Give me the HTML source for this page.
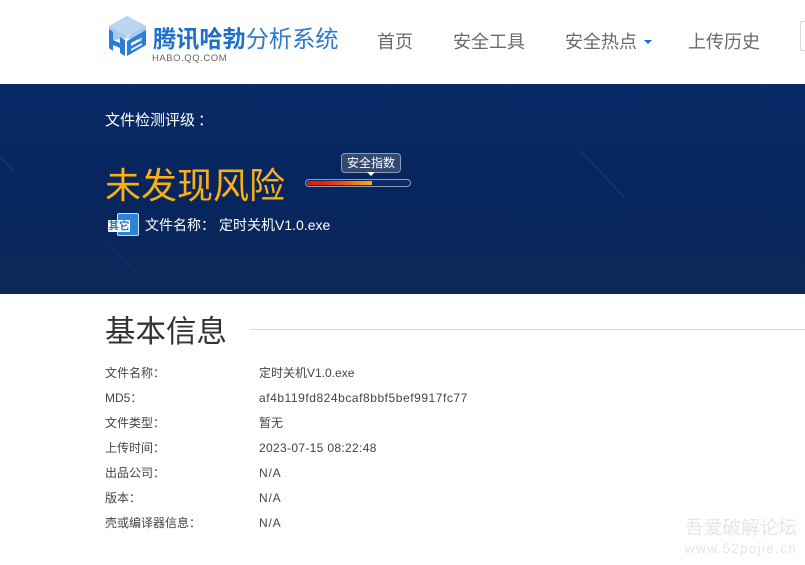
<!DOCTYPE html>
<html lang="zh">
<head>
<meta charset="utf-8">
<title>腾讯哈勃分析系统</title>
<style>
html,body{margin:0;padding:0;background:#fff}
body{width:805px;height:565px;overflow:hidden;position:relative;font-family:"Liberation Sans","Noto Sans CJK SC",sans-serif}
.a{position:absolute;white-space:nowrap}
.nav{top:29px;font-size:18px;line-height:26px;color:#6b6b6b}
.row{font-size:12px;line-height:18px;color:#444}
.val{font-size:12px;line-height:18px;color:#444;left:259px}
.lab{left:105px}
</style>
</head>
<body>
<svg class="a" style="left:108px;top:16px" width="40" height="40" viewBox="0 0 40 40">
<polygon points="19,0 38,10 38,25 19,22 1,25 1,10" fill="#a9c9ee"/>
<polygon points="19,0 22,1 22,20 19,22" fill="#e3eefa"/>
<polygon points="1,10 19,20 38,10 19,0" fill="#bcd5f2"/>
<path d="M1 13 L5 16 L5 24 L12 27 L12 21 L17 24 L17 40 L12 37 L12 32 L5 29 L5 35 L1 32 Z" fill="#2d7ddb"/>
<path d="M19 25 L38 14 L38 29 L19 40 Z M23 27 L23 30 L34 24 L34 21 Z M23 33 L23 35 L34 29 L34 27 Z" fill="#2d7ddb" fill-rule="evenodd"/>
</svg>
<div class="a" style="left:153px;top:23px;font-size:23.2px;line-height:32px;color:#1c6fd0;font-weight:700">腾讯哈勃<span style="font-weight:400;color:#2b7bd6">分析系统</span></div>
<div class="a" style="left:152px;top:53px;font-size:9.5px;line-height:12px;color:#666;letter-spacing:.55px">HABO.QQ.COM</div>

<div class="a nav" style="left:377px">首页</div>
<div class="a nav" style="left:453px">安全工具</div>
<div class="a nav" style="left:565px">安全热点</div>
<div class="a" style="left:644px;top:40px;width:0;height:0;border-left:4px solid transparent;border-right:4px solid transparent;border-top:4px solid #1c6fd0"></div>
<div class="a nav" style="left:688px">上传历史</div>
<div class="a" style="left:800px;top:21px;width:10px;height:30px;border:1px solid #d5d5d5;border-radius:2px;box-sizing:border-box"></div>

<div class="a" style="left:0;top:84px;width:805px;height:210px;overflow:hidden;background:linear-gradient(180deg,#082a66 0%,#07265f 45%,#0b2858 100%)">
<svg width="805" height="210" style="position:absolute;left:0;top:0">
<line x1="0" y1="72" x2="14" y2="88" stroke="#123b76" stroke-width="1.2"/>
<line x1="580" y1="66" x2="625" y2="114" stroke="#123b76" stroke-width="1.2"/>
<line x1="105" y1="155" x2="145" y2="199" stroke="#0c316a" stroke-width="1.2"/>
</svg>
</div>

<div class="a" style="left:105px;top:110px;font-size:15px;line-height:22px;color:#fff">文件检测评级<span style="position:relative;left:3px">：</span></div>
<div class="a" style="left:105px;top:161px;font-size:36px;line-height:50px;color:#fdaf10">未发现风险</div>

<div class="a" style="left:341px;top:153px;width:60px;height:20px;box-sizing:border-box;border:1px solid #8b9cb8;border-radius:4px;background:#33496f;color:#fff;font-size:12px;line-height:18px;text-align:center">安全指数</div>
<div class="a" style="left:367px;top:172px;width:0;height:0;border-left:4px solid transparent;border-right:4px solid transparent;border-top:4px solid #fff"></div>
<div class="a" style="left:305px;top:179px;width:106px;height:8px;box-sizing:border-box;border:1px solid #8b9cb8;border-radius:4px;background:#0b2a60;overflow:hidden">
<div style="margin:1px 0 0 1px;width:65px;height:4px;background:linear-gradient(90deg,#e51a08 0%,#e8200a 25%,#f45a08 60%,#fdae0e 100%);border-radius:2px 0 0 2px"></div>
</div>

<div class="a" style="left:117px;top:213px;width:22px;height:23px;box-sizing:border-box;background:#2a84d8;border:1px solid #cfe3f7;border-radius:2px"></div>
<div class="a" style="left:108px;top:220px;width:22px;height:12px;background:#fff;border-radius:1px;color:#1f76cc;font-size:10.5px;line-height:12px;font-weight:700;text-align:center;overflow:hidden">其它</div>

<div class="a" style="left:145px;top:214px;font-size:14px;line-height:22px;color:#fff">文件名称：</div>
<div class="a" style="left:219px;top:214px;font-size:14px;line-height:22px;color:#fff">定时关机V1.0.exe</div>

<div class="a" style="left:105px;top:312px;font-size:30.5px;line-height:40px;color:#333">基本信息</div>
<div class="a" style="left:250px;top:329px;width:555px;height:1px;background:#d9d9d9"></div>

<div class="a row lab" style="top:364px">文件名称：</div><div class="a val" style="top:364px">定时关机V1.0.exe</div>
<div class="a row lab" style="top:389px">MD5：</div><div class="a val" style="top:389px;letter-spacing:.55px">af4b119fd824bcaf8bbf5bef9917fc77</div>
<div class="a row lab" style="top:414px">文件类型：</div><div class="a val" style="top:414px">暂无</div>
<div class="a row lab" style="top:439px">上传时间：</div><div class="a val" style="top:439px;letter-spacing:.33px">2023-07-15 08:22:48</div>
<div class="a row lab" style="top:464px">出品公司：</div><div class="a val" style="top:464px;letter-spacing:.8px">N/A</div>
<div class="a row lab" style="top:489px">版本：</div><div class="a val" style="top:489px;letter-spacing:.8px">N/A</div>
<div class="a row lab" style="top:514px">壳或编译器信息：</div><div class="a val" style="top:514px;letter-spacing:.8px">N/A</div>

<div class="a" style="left:685px;top:516px;font-size:18.7px;line-height:24px;color:#e6e6e6">吾爱破解论坛</div>
<div class="a" style="left:685px;top:541px;font-size:13.5px;line-height:16px;color:#e6e6e6;letter-spacing:1.3px">www.52pojie.cn</div>
</body>
</html>
